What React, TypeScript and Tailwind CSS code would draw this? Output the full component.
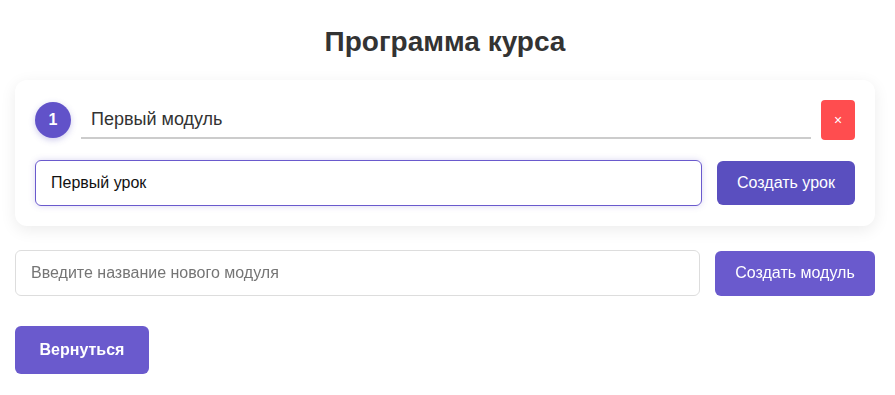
import { useState } from 'react';

const font = { fontFamily: '"Liberation Sans", Arial, sans-serif' };

export default function App() {
  const [lesson, setLesson] = useState('Первый урок');
  const [moduleName, setModuleName] = useState('');

  return (
    <div className="bg-white pt-[24px] pb-[20px] pl-[15px] pr-[20px] text-[#333]" style={font}>
      <h2 className="mb-[20px] flex h-[36px] items-center justify-center text-[28px] font-bold text-[#333]">
        Программа курса
      </h2>

      {/* Module card */}
      <div className="flex flex-col gap-[20px] rounded-[12px] bg-white p-[20px] shadow-[0_4px_16px_rgba(0,0,0,0.08)]">
        <div className="flex h-[40px] items-center gap-[10px]">
          <div className="flex h-[36px] w-[36px] shrink-0 items-center justify-center rounded-full bg-[#6152c9] text-[16px] font-bold text-white shadow-[0_2px_6px_rgba(90,79,191,0.3)]">
            1
          </div>
          <input
            defaultValue="Первый модуль"
            className="h-[38px] min-w-0 flex-1 border-b-2 border-[#ccc] bg-transparent px-[10px] text-[18px] text-[#333] outline-none"
          />
          <button className="flex h-[40px] w-[34px] shrink-0 items-center justify-center rounded-[4px] bg-[#ff4d4f] text-[14px] text-white">
            ×
          </button>
        </div>

        <div className="flex items-center gap-[15px]">
          <input
            autoFocus
            value={lesson}
            onChange={(e) => setLesson(e.target.value)}
            className="h-[46px] min-w-0 flex-1 rounded-[6px] border border-[#6a5acd] px-[15px] text-[16px] text-[#111] shadow-[0_0_6px_rgba(106,90,205,0.25)] outline-none"
          />
          <button className="h-[44px] w-[138px] shrink-0 rounded-[6px] bg-[#5a4fbf] text-[16px] text-white">
            Создать урок
          </button>
        </div>
      </div>

      {/* New module */}
      <div className="mt-[24px] flex items-center gap-[15px]">
        <input
          value={moduleName}
          onChange={(e) => setModuleName(e.target.value)}
          placeholder="Введите название нового модуля"
          className="h-[46px] min-w-0 flex-1 rounded-[6px] border border-[#ddd] px-[15px] text-[16px] text-[#333] outline-none placeholder:text-[#757575]"
        />
        <button className="h-[45px] w-[160px] shrink-0 rounded-[6px] bg-[#6a5acd] text-[16px] text-white">
          Создать модуль
        </button>
      </div>

      <button className="mt-[30px] h-[48px] w-[134px] rounded-[6px] bg-[#6a5acd] text-[16px] font-bold text-white">
        Вернуться
      </button>
    </div>
  );
}
